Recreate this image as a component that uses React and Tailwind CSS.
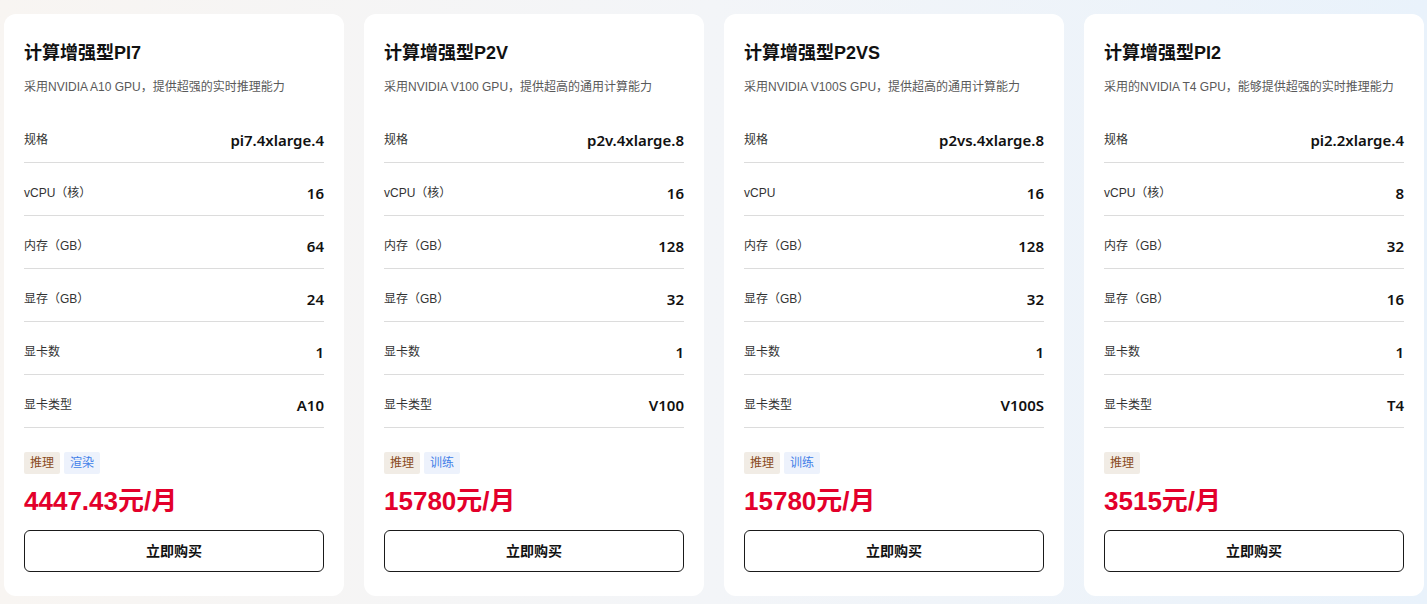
import React from "react";

const products = [
  {
    name: "计算增强型PI7",
    desc: "采用NVIDIA A10 GPU，提供超强的实时推理能力",
    specs: [
      ["规格", "pi7.4xlarge.4"],
      ["vCPU（核）", "16"],
      ["内存（GB）", "64"],
      ["显存（GB）", "24"],
      ["显卡数", "1"],
      ["显卡类型", "A10"],
    ],
    tags: [
      { label: "推理", tone: "brown" },
      { label: "渲染", tone: "blue" },
    ],
    price: "4447.43元/月",
  },
  {
    name: "计算增强型P2V",
    desc: "采用NVIDIA V100 GPU，提供超高的通用计算能力",
    specs: [
      ["规格", "p2v.4xlarge.8"],
      ["vCPU（核）", "16"],
      ["内存（GB）", "128"],
      ["显存（GB）", "32"],
      ["显卡数", "1"],
      ["显卡类型", "V100"],
    ],
    tags: [
      { label: "推理", tone: "brown" },
      { label: "训练", tone: "blue" },
    ],
    price: "15780元/月",
  },
  {
    name: "计算增强型P2VS",
    desc: "采用NVIDIA V100S GPU，提供超高的通用计算能力",
    specs: [
      ["规格", "p2vs.4xlarge.8"],
      ["vCPU", "16"],
      ["内存（GB）", "128"],
      ["显存（GB）", "32"],
      ["显卡数", "1"],
      ["显卡类型", "V100S"],
    ],
    tags: [
      { label: "推理", tone: "brown" },
      { label: "训练", tone: "blue" },
    ],
    price: "15780元/月",
  },
  {
    name: "计算增强型PI2",
    desc: "采用的NVIDIA T4 GPU，能够提供超强的实时推理能力",
    specs: [
      ["规格", "pi2.2xlarge.4"],
      ["vCPU（核）", "8"],
      ["内存（GB）", "32"],
      ["显存（GB）", "16"],
      ["显卡数", "1"],
      ["显卡类型", "T4"],
    ],
    tags: [{ label: "推理", tone: "brown" }],
    price: "3515元/月",
  },
];

function Tag({ label, tone }) {
  return (
    <span
      className={`inline-flex h-[22px] items-center rounded-[2px] px-[6px] text-[12px] ${
        tone === "brown" ? "bg-[#f1ece5] text-[#8a4a1c]" : "bg-[#edf2fc] text-[#3f7ee8]"
      }`}
    >
      {label}
    </span>
  );
}

function ProductCard({ product }) {
  return (
    <div className="flex flex-col rounded-[12px] bg-white px-[20px] pt-[27px] pb-[24px]">
      <h3 className="text-[18px] font-bold leading-[24px] text-[#111]">{product.name}</h3>
      <p className="mt-[13px] text-[12px] leading-[18px] text-[#595959]">{product.desc}</p>

      <div className="mt-[14px]">
        {product.specs.map(([label, value]) => (
          <div
            key={label}
            className="flex items-center justify-between border-b border-[#dcdcdc] pt-[20px] pb-[12px] leading-[20px]"
          >
            <span className="text-[12px] text-[#333]">{label}</span>
            <span className="font-['Noto_Sans','Noto_Sans_CJK_SC',sans-serif] text-[15px] font-semibold text-[#111]">
              {value}
            </span>
          </div>
        ))}
      </div>

      <div className="mt-[24px] flex gap-[4px]">
        {product.tags.map((t) => (
          <Tag key={t.label} {...t} />
        ))}
      </div>

      <div className="mt-[11px] text-[26px] font-bold leading-[32px] text-[#e3002b]">{product.price}</div>

      <button className="mt-[13px] h-[42px] w-full rounded-[6px] border border-[#1a1a1a] text-[14px] font-bold leading-[20px] text-[#111]">
        立即购买
      </button>
    </div>
  );
}

export default function App() {
  return (
    <div className="min-h-[604px] bg-gradient-to-r from-[#f8f5f2] via-[#f3f5f8] to-[#e9f2fb] pt-[14px] pr-[3px] pb-[8px] pl-[4px] font-['Liberation_Sans','Noto_Sans_CJK_SC',sans-serif]">
      <div className="grid grid-cols-4 gap-[20px]">
        {products.map((p) => (
          <ProductCard key={p.name} product={p} />
        ))}
      </div>
    </div>
  );
}
